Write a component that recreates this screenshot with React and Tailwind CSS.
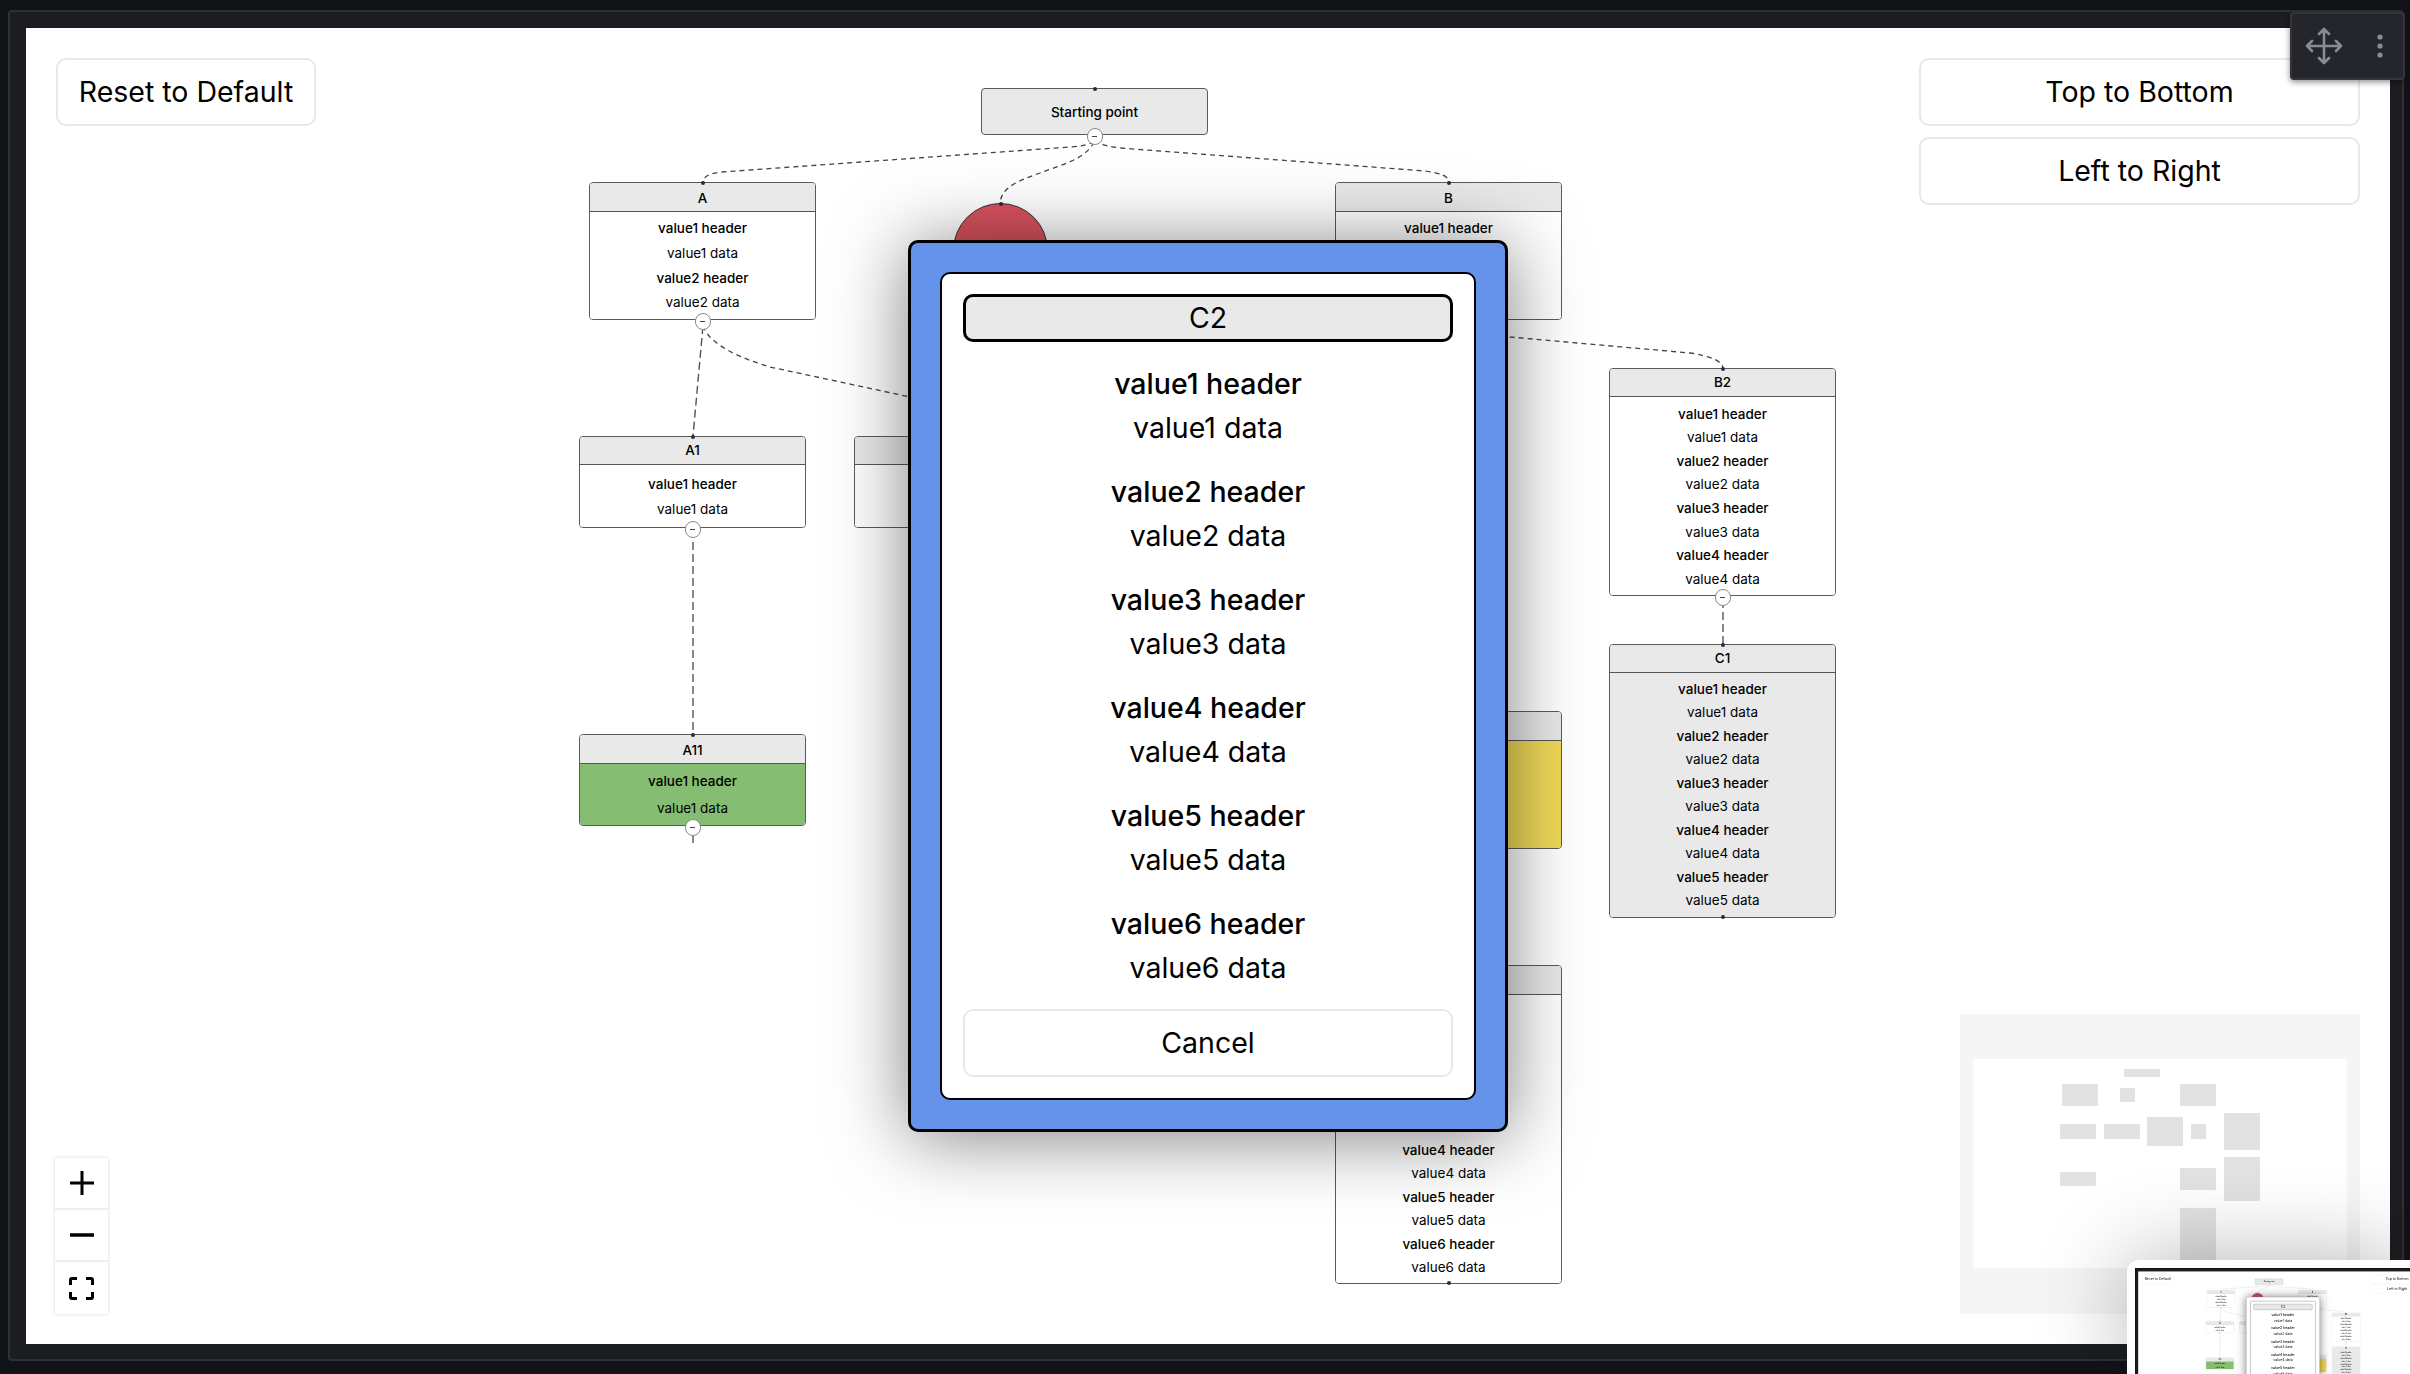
import React from "react";

const FONT = "font-['Inter','Noto_Sans',sans-serif]";

function pairs(n) {
  const out = [];
  for (let i = 1; i <= n; i++) {
    out.push({ t: `value${i} header`, h: true });
    out.push({ t: `value${i} data`, h: false });
  }
  return out;
}

const NODES = [
  { title: "A", x: 589, y: 182, h: 138, head: 29, n: 2, rowH: 24.8, handle: true },
  { title: "B", x: 1335, y: 182, h: 138, head: 29, n: 2, rowH: 24.8, handle: false },
  { title: "A1", x: 579, y: 436, h: 92, head: 28, n: 1, rowH: 25.4, handle: true, nudge: true },
  { title: "A2", x: 854, y: 436, h: 92, head: 28, n: 1, rowH: 25.4, handle: false },
  { title: "A11", x: 579, y: 734, h: 92, head: 29, n: 1, rowH: 27, handle: true, body: "bg-[#85bd72]" },
  { title: "B2", x: 1609, y: 368, h: 228, head: 28, n: 4, rowH: 23.6, handle: true, nudge: true },
  { title: "C1", x: 1609, y: 644, h: 274, head: 28, n: 5, rowH: 23.5, dot: true, body: "bg-[#e9e9e9]" },
  { title: "B1", x: 1335, y: 711, h: 138, head: 29, n: 2, rowH: 24.8, body: "bg-[#f0da58]" },
  { title: "C2", x: 1335, y: 965, h: 319, head: 29, n: 6, rowH: 23.4, dot: true },
];

const MINI = [
  [164, 55, 36, 8],
  [102, 70, 36, 22],
  [160, 74, 15, 14],
  [220, 70, 36, 22],
  [100, 110, 36, 15],
  [144, 110, 36, 15],
  [187, 103, 36, 29],
  [231, 110, 15, 15],
  [264, 99, 36, 37],
  [100, 158, 36, 14],
  [220, 154, 36, 22],
  [264, 143, 36, 44],
  [220, 194, 36, 52],
];

function Dot({ className }) {
  return <div className={`absolute left-1/2 -ml-[2px] w-[4px] h-[4px] rounded-full bg-[#2a2a40] ${className}`} />;
}

function Handle() {
  return (
    <div className="absolute left-1/2 -ml-[8px] -bottom-[11px] w-[16px] h-[17px] rounded-full bg-white border border-[#8a8a8a] flex items-center justify-center">
      <div className="w-[5px] h-[1.5px] bg-[#444]" />
    </div>
  );
}

function FlowNode({ node }) {
  return (
    <div
      className="absolute w-[227px] flex flex-col rounded-[4px] border border-[#5a5a5a] bg-white text-black"
      style={{ left: node.x - 26, top: node.y - 28, height: node.h }}
    >
      <div
        className={`shrink-0 rounded-t-[3px] bg-[#e9e9e9] border-b border-[#555] flex items-center justify-center text-[13.5px] font-medium ${node.head === 29 ? "pt-[3px]" : ""}`}
        style={{ height: node.head }}
      >
        {node.title}
      </div>
      <div
        className={`flex-1 rounded-b-[3px] flex flex-col justify-center items-center text-[13.5px] ${node.nudge ? "pt-[2px]" : ""} ${node.body || "bg-white"}`}
      >
        {pairs(node.n).map((r) => (
          <div key={r.t} className={r.h ? "font-medium" : "font-normal"} style={{ lineHeight: `${node.rowH}px` }}>
            {r.t}
          </div>
        ))}
      </div>
      <Dot className="-top-[2px]" />
      {node.handle && <Handle />}
      {node.dot && <Dot className="-bottom-[2px]" />}
    </div>
  );
}

function Edges() {
  const curved = [
    "M1094 142 Q1085 146 1070 147 L722 172 Q703 174 703 182",
    "M1094 142 Q1105 146 1120 148 L1425 171 Q1449 174 1449 182",
    "M1094 142 C1085 160 1060 165 1040 173 C1015 182 1001 188 1000 204",
    "M703 326 C710 345 740 358 770 367 L915 398",
    "M1449 320 L1510 337 L1690 353 Q1722 358 1723 368",
  ];
  const straight = ["M703 326 L693 436", "M693 530 L693 734", "M693 835 L693 844", "M1723 600 L1723 644"];
  return (
    <svg className="absolute left-0 top-0 w-[2364px] h-[1316px]" viewBox="26 28 2364 1316" fill="none">
      {curved.map((d) => (
        <path key={d} d={d} stroke="#444" strokeWidth="1.3" strokeDasharray="5 4" />
      ))}
      {straight.map((d) => (
        <path key={d} d={d} stroke="#555" strokeWidth="1.4" strokeDasharray="8 4" />
      ))}
    </svg>
  );
}

function OutlineButton({ className, children }) {
  return (
    <div className={`flex items-center justify-center rounded-[10px] border-2 border-[#e8e8e8] bg-white text-black text-[28.5px] ${className}`}>
      {children}
    </div>
  );
}

function ZoomControls() {
  return (
    <div className="-ml-[1px] w-[53px] flex flex-col bg-white shadow-[0_0_3px_rgba(0,0,0,0.18)]">
      <div className="h-[52px] flex items-center justify-center border-b-2 border-[#eeeeee]">
        <svg width="26" height="26" viewBox="0 0 26 26"><path d="M13 1V25M1 13H25" stroke="#000" strokeWidth="3" /></svg>
      </div>
      <div className="h-[52px] flex items-center justify-center border-b-2 border-[#eeeeee]">
        <svg width="26" height="6" viewBox="0 0 26 6"><path d="M1 3H25" stroke="#000" strokeWidth="3.5" /></svg>
      </div>
      <div className="h-[52px] flex items-center justify-center">
        <svg width="25" height="23" viewBox="0 0 25 23" fill="none">
          <path d="M1.5 8V3Q1.5 1.5 3 1.5H8M17 1.5H22Q23.5 1.5 23.5 3V8M23.5 15V20Q23.5 21.5 22 21.5H17M8 21.5H3Q1.5 21.5 1.5 20V15" stroke="#000" strokeWidth="3" />
        </svg>
      </div>
    </div>
  );
}

function MiniMap() {
  return (
    <div className="relative w-[400px] h-[300px] bg-[#f5f5f5] px-[13px] pt-[45px]">
      <div className="w-[374px] h-[209px] bg-white" />
      {MINI.map(([x, y, w, h]) => (
        <div key={`${x}-${y}`} className="absolute bg-[#e2e2e2]" style={{ left: x, top: y, width: w, height: h }} />
      ))}
    </div>
  );
}

function Modal({ thumb }) {
  const groups = [1, 2, 3, 4, 5, 6];
  return (
    <div className="absolute inset-0 flex items-center justify-center">
      <div
        className={`w-[600px] p-[29px] rounded-[10px] border-[3px] shadow-[0_5px_75px_rgba(0,0,0,0.5)] ${
          thumb ? "border-[#9a9a9a] bg-white" : "border-black bg-[#6593ea]"
        }`}
      >
        <div className={`flex flex-col px-[21px] pt-[20px] pb-[21px] rounded-[10px] bg-white text-black ${thumb ? "border-[6px] border-[#b5b5b5]" : "border-2 border-black"}`}>
          <div className={`h-[48px] flex items-center justify-center rounded-[10px] border-[3px] bg-[#e9e9e9] text-[28.5px] ${thumb ? "border-[#888]" : "border-black"}`}>
            C2
          </div>
          <div className="mt-[20px] flex flex-col gap-[20px]">
            {groups.map((g) => (
              <div key={g} className="flex flex-col items-center text-[28.5px] leading-[44px]">
                <div className="font-medium">{`value${g} header`}</div>
                <div>{`value${g} data`}</div>
              </div>
            ))}
          </div>
          <OutlineButton className="mt-[19px] h-[68px]">Cancel</OutlineButton>
        </div>
      </div>
    </div>
  );
}

function Scene({ thumb }) {
  return (
    <div className={`w-[2410px] h-[1374px] overflow-hidden bg-[#111318] pl-[8px] pt-[10px] ${FONT}`}>
      <div className="w-[2396px] h-[1351px] rounded-[4px] border-2 border-[#2e3035] bg-[#1b1d21] pl-[16px] pt-[16px]">
        <div className="relative w-[2364px] h-[1316px] overflow-hidden bg-white">
          <Edges />
          <div className="absolute left-[927px] top-[175px] w-[95px] h-[95px] rounded-full bg-[#d9535f] border border-[#333]">
            <Dot className="-top-[2px]" />
          </div>
          <div className="absolute w-[227px] h-[47px] pt-[2px] rounded-[4px] border border-[#5a5a5a] bg-[#e9e9e9] left-[955px] top-[60px] flex items-center justify-center text-[13.5px] font-medium text-black">
            Starting point
            <Dot className="-top-[2px]" />
            <Handle />
          </div>
          {NODES.map((n) => (
            <FlowNode key={n.title} node={n} />
          ))}
          <div className="absolute inset-0 flex flex-col justify-between px-[30px] pt-[30px] pb-[30px] pointer-events-none">
            <div className="flex justify-between items-start">
              <OutlineButton className="w-[260px] h-[68px]">Reset to Default</OutlineButton>
              <div className="w-[441px] flex flex-col gap-[11px]">
                <OutlineButton className="h-[68px]">Top to Bottom</OutlineButton>
                <OutlineButton className="h-[68px]">Left to Right</OutlineButton>
              </div>
            </div>
            <div className="flex justify-between items-end">
              <ZoomControls />
              <MiniMap />
            </div>
          </div>
          <Modal thumb={thumb} />
        </div>
      </div>
    </div>
  );
}

function DragPanel() {
  return (
    <div className="absolute left-[2290px] top-[12px] w-[115px] h-[68px] rounded-[4px] border-2 border-[#33353a] bg-[#24262b] shadow-[0_2px_6px_rgba(0,0,0,0.45)] flex items-center pl-[13px] gap-[34px]">
      <svg width="38" height="38" viewBox="0 0 38 38" fill="none" stroke="#8a8b93" strokeWidth="2.6" strokeLinecap="round" strokeLinejoin="round">
        <path d="M19 2V36M2 19H36M14 7L19 2L24 7M14 31L19 36L24 31M7 14L2 19L7 24M31 14L36 19L31 24" />
      </svg>
      <svg width="6" height="26" viewBox="0 0 6 26" fill="#8a8b93">
        <circle cx="3" cy="4" r="2.6" />
        <circle cx="3" cy="13" r="2.6" />
        <circle cx="3" cy="22" r="2.6" />
      </svg>
    </div>
  );
}

function Thumbnail() {
  return (
    <div className="absolute left-[2127px] top-[1260px] w-[283px] h-[114px] rounded-tl-[12px] bg-white shadow-[0_0_90px_rgba(0,0,0,0.3)] overflow-hidden">
      <div className="absolute left-[8px] top-[8px] origin-top-left scale-[0.1225] blur-[5px]">
        <Scene thumb />
      </div>
    </div>
  );
}

export default function App() {
  return (
    <div className="relative w-[2410px] h-[1374px] overflow-hidden">
      <Scene />
      <DragPanel />
      <Thumbnail />
    </div>
  );
}
